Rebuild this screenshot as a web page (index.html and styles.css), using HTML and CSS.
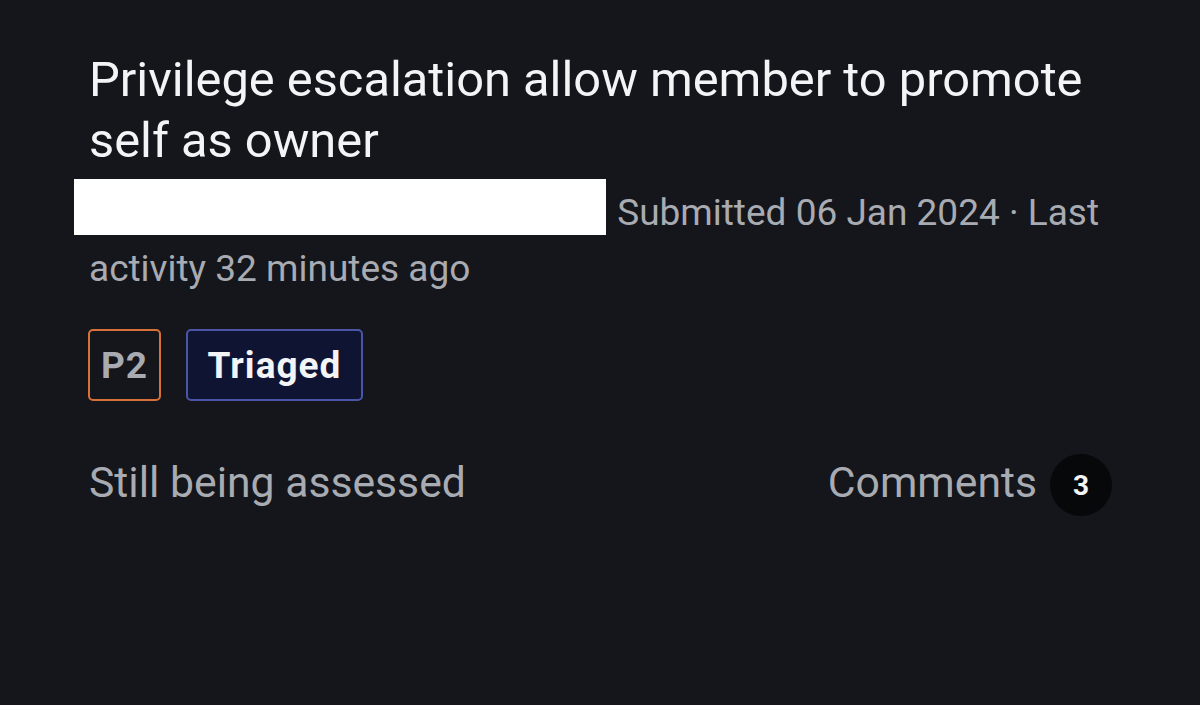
FILE: index.html
```html
<!DOCTYPE html>
<html>
<head>
<meta charset="utf-8">
<link rel="stylesheet" href="styles.css">
</head>
<body>
<div class="card">
  <h1 class="title">Privilege escalation allow member to promote self as owner</h1>
  <p class="meta"><span class="redact"></span> Submitted 06 Jan 2024 · Last activity 32 minutes ago</p>
  <div class="badges">
    <span class="badge badge-priority">P2</span>
    <span class="badge badge-status">Triaged</span>
  </div>
  <div class="footer">
    <span class="assess">Still being assessed</span>
    <span class="comments"><span class="comments-label">Comments</span><span class="count">3</span></span>
  </div>
</div>
</body>
</html>
```

FILE: styles.css
```css
html, body {
  margin: 0;
  padding: 0;
  background: #14161b;
  height: 100%;
}
body {
  font-family: Roboto, "Noto Sans", sans-serif;
}
.card {
  padding: 49px 88px 0 89px;
}
.title {
  margin: 0;
  font-size: 48.8px;
  line-height: 61px;
  font-weight: 400;
  color: #f3f4f6;
}
.meta {
  margin: 14px 0 0 0;
  font-size: 37px;
  line-height: 55px;
  color: #a8abb2;
}
.redact {
  display: inline-block;
  vertical-align: top;
  position: relative;
  top: -6px;
  width: 532px;
  height: 56px;
  margin-left: -15px;
  margin-right: 2px;
  background: #ffffff;
}
.badges {
  display: flex;
  gap: 25px;
  margin-top: 33px;
  margin-left: -1px;
}
.badge {
  box-sizing: border-box;
  height: 72px;
  display: flex;
  align-items: center;
  justify-content: center;
  font-size: 37px;
  letter-spacing: 1px;
  font-weight: 700;
  border-radius: 5px;
  border: 2px solid;
}
.badge-priority {
  width: 73px;
  border-color: #d8703a;
  color: #a8abb2;
}
.badge-status {
  width: 177px;
  background: #0f1433;
  border-color: #4b55a6;
  color: #f3f4f6;
}
.footer {
  display: flex;
  justify-content: space-between;
  align-items: center;
  margin-top: 53px;
}
.assess, .comments {
  font-size: 42.7px;
  color: #a8abb2;
}
.assess, .comments-label {
  padding-bottom: 6px;
}
.comments {
  display: flex;
  align-items: center;
  gap: 13px;
}
.count {
  width: 62px;
  height: 62px;
  border-radius: 50%;
  background: #07080a;
  color: #f3f4f6;
  font-size: 28px;
  font-weight: 700;
  display: flex;
  align-items: center;
  justify-content: center;
}
```
